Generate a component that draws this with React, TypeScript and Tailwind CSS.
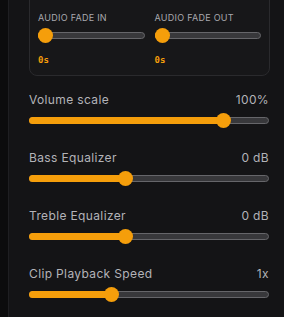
const ORANGE = 'bg-[#f59e0b]'

function Slider({ pct }: { pct: number }) {
  // thumb is 15px, travels over (width - 15px)
  const left = `calc((100% - 15px) * ${pct})`
  return (
    <div className="relative h-[15px] w-full">
      <div className="absolute left-0 right-0 top-[4px] h-[7px] rounded-full border border-[#66666a] bg-[#38383b]" />
      <div
        className={`absolute left-0 top-[4px] h-[7px] rounded-l-full ${ORANGE}`}
        style={{ width: `calc(${left} + 7.5px)` }}
      />
      <div
        className={`absolute top-0 h-[15px] w-[15px] rounded-full ${ORANGE}`}
        style={{ left }}
      />
    </div>
  )
}

function Fade({ label }: { label: string }) {
  return (
    <div className="flex flex-col">
      <div className="h-[12px] text-[9px] leading-[12px] uppercase tracking-[0.03em] text-[#a9a9ae]">
        {label}
      </div>
      <div className="mt-[4px]">
        <Slider pct={0} />
      </div>
      <div className="mt-[12px] h-[10px] font-['DejaVu_Sans_Mono',monospace] text-[9px] font-bold leading-[10px] text-[#f59e0b]">
        0s
      </div>
    </div>
  )
}

function Row({ label, value, pct }: { label: string; value: string; pct: number }) {
  return (
    <div className="flex flex-col">
      <div className="flex h-4 items-center justify-between text-[12px] leading-4 tracking-[0.03em] text-[#b3b3b8]">
        <span>{label}</span>
        <span>{value}</span>
      </div>
      <div className="mt-[5px]">
        <Slider pct={pct} />
      </div>
    </div>
  )
}

export default function App() {
  return (
    <div className="flex h-[317px] w-[284px] overflow-hidden bg-[#0c0c0d] font-['Inter',sans-serif]">
      <div className="w-[8px] shrink-0" />
      <div className="flex flex-1 flex-col border-l border-[#1f1f22] bg-[#141416] pl-[20px] pr-[14px]">
        <div className="-mt-[10px] rounded-lg border border-[#2a2a2d] bg-[#171719] px-[8px] pt-[21px] pb-[10px]">
          <div className="grid grid-cols-2 gap-[10px]">
            <Fade label="Audio fade in" />
            <Fade label="Audio fade out" />
          </div>
        </div>
        <div className="mt-4 flex flex-col gap-[22px] pr-[1px]">
          <Row label="Volume scale" value="100%" pct={0.833} />
          <Row label="Bass Equalizer" value="0 dB" pct={0.397} />
          <Row label="Treble Equalizer" value="0 dB" pct={0.397} />
          <Row label="Clip Playback Speed" value="1x" pct={0.334} />
        </div>
      </div>
    </div>
  )
}
